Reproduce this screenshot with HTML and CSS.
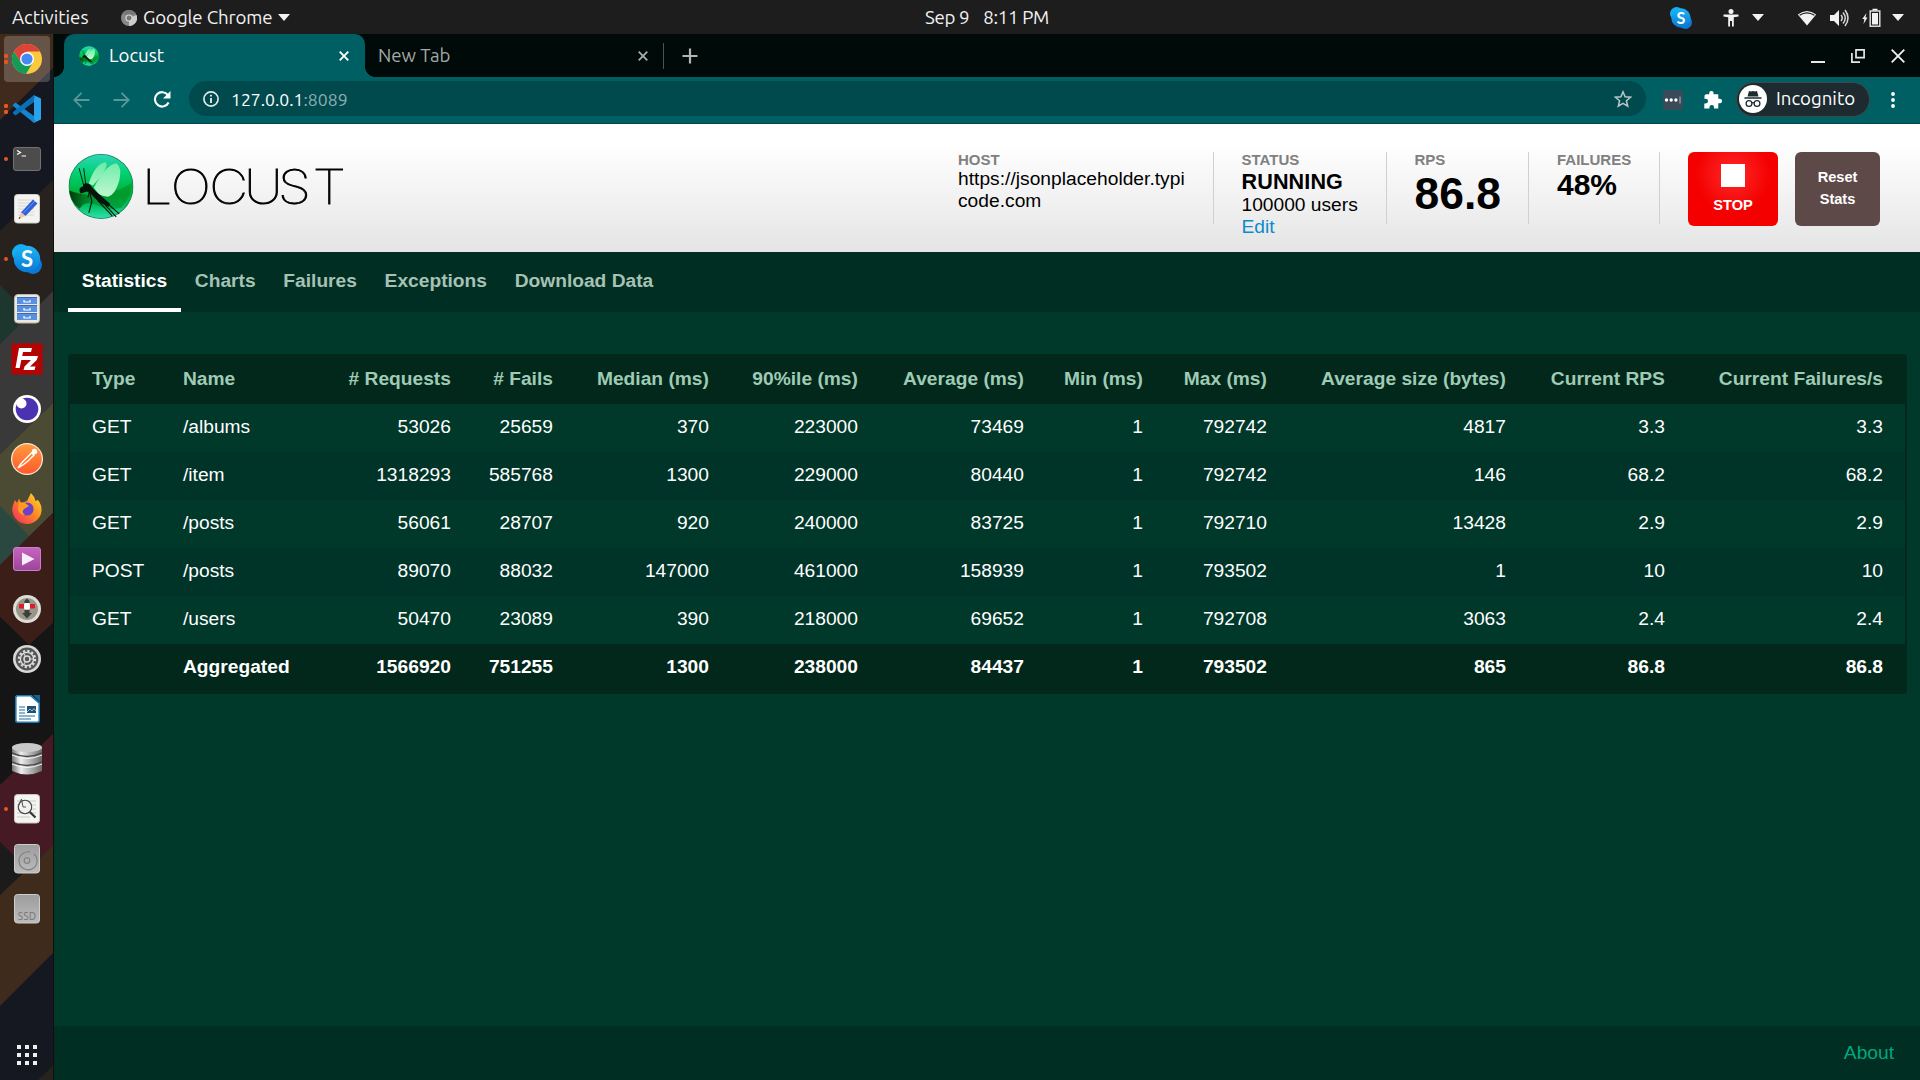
FILE: index.html
```html
<!DOCTYPE html>
<html lang="en">
<head>
<meta charset="utf-8">
<title>Locust</title>
<link rel="stylesheet" href="styles.css">
</head>
<body>
<svg class="defs" width="0" height="0" aria-hidden="true">
  <defs>
    <linearGradient id="orb" x1="0" y1="0" x2="0" y2="1"><stop offset="0" stop-color="#2fd6b8"/><stop offset=".3" stop-color="#00d070"/><stop offset=".62" stop-color="#00b038"/><stop offset=".8" stop-color="#00c060"/><stop offset="1" stop-color="#2fe0b0"/></linearGradient>
    <linearGradient id="orbShade" x1="0" y1="0" x2="1" y2="0"><stop offset="0" stop-color="#003b08"/><stop offset=".4" stop-color="#006a15" stop-opacity=".4"/><stop offset="1" stop-color="#008a1c" stop-opacity=".5"/></linearGradient>
    <linearGradient id="wing" x1="0" y1="0" x2="0" y2="1"><stop offset="0" stop-color="#7df0ac"/><stop offset="1" stop-color="#d4ffe0"/></linearGradient>
    <linearGradient id="skyblue" x1="0" y1="0" x2="0" y2="1"><stop offset="0" stop-color="#1cb5f5"/><stop offset="1" stop-color="#0a78d6"/></linearGradient>
    <linearGradient id="orange" x1="0" y1="0" x2="0" y2="1"><stop offset="0" stop-color="#ff9a3e"/><stop offset="1" stop-color="#ff5a2a"/></linearGradient>
    <linearGradient id="fox" x1="1" y1="0" x2="0" y2="1"><stop offset="0" stop-color="#ffe23a"/><stop offset=".45" stop-color="#ff8a1e"/><stop offset="1" stop-color="#f0256a"/></linearGradient>
    <linearGradient id="purple" x1="0" y1="0" x2="0" y2="1"><stop offset="0" stop-color="#c565c0"/><stop offset="1" stop-color="#9c459c"/></linearGradient>
    <linearGradient id="metal" x1="0" y1="0" x2="1" y2="0"><stop offset="0" stop-color="#777"/><stop offset=".3" stop-color="#eee"/><stop offset="1" stop-color="#6b6b6b"/></linearGradient>
    <linearGradient id="disk" x1="0" y1="0" x2="0" y2="1"><stop offset="0" stop-color="#9c9c9c"/><stop offset="1" stop-color="#bcbcbc"/></linearGradient>
    <symbol id="locust" viewBox="0 0 64 64">
      <circle cx="32" cy="32" r="32" fill="#13824f"/>
      <circle cx="32" cy="32" r="31.2" fill="url(#orb)"/>
      <path d="M1 36Q32 48 63 28Q62 42 52 53Q40 56 32 52Q16 44 11 54Q1 46 1 36Z" fill="url(#orbShade)"/>
      <path d="M20 29Q26 10 36 8Q42 11 24 31Z" fill="url(#wing)" opacity=".8"/>
      <path d="M25 33Q36 11 47 9Q53 13 50 26Q46 40 39 42Q33 42 29 39Z" fill="url(#wing)" opacity=".9"/>
      <path d="M11 37Q10 33 14 32L15 29.5Q19 27.5 22 31L25 35L33 42L41 49L39.5 52L30 47.5L22 39.5L18 37L14 38.5L12 39Z" fill="#06140b"/>
      <g fill="none" stroke="#06140b"><path d="M15 31L10.5 14M17 30L15 14" stroke-width=".9"/><path d="M21 38L23 47L20 58M20.5 38L19 43" stroke-width="1.1"/><path d="M34 45L50 59M36 50L47 62M29 46L43 61" stroke-width="1.1"/></g>
    </symbol>
    <symbol id="skype" viewBox="0 0 30 30"><circle cx="9" cy="9" r="9" fill="#12b0f3"/><circle cx="21" cy="21" r="9" fill="#0b78d3"/><circle cx="15" cy="15" r="13.2" fill="url(#skyblue)"/><text x="15" y="22.5" text-anchor="middle" class="skype-s">S</text></symbol>
  </defs>
</svg>

<header class="topbar">
  <span class="activities">Activities</span>
  <svg class="mini-chrome" width="16" height="16" viewBox="0 0 16 16"><circle cx="8" cy="8" r="8" fill="#888"/><path d="M8 8L15.5 5A8 8 0 0 1 8 16Z" fill="#ccc"/><path d="M1 4A8 8 0 0 1 15 4L8 5Z" fill="#777"/><circle cx="8" cy="8" r="3.6" fill="#ddd"/><circle cx="8" cy="8" r="2.5" fill="#777"/></svg>
  <span class="app-name">Google Chrome</span>
  <i class="caret"></i>
  <span class="clock"><span class="date">Sep 9</span><span class="time">8:11 PM</span></span>
  <div class="tray">
    <svg width="22" height="22" viewBox="0 0 30 30"><use href="#skype"/></svg>
    <svg class="person" width="16" height="18" viewBox="0 0 16 18" fill="#f2f2f2"><circle cx="8" cy="2.6" r="2.5"/><path d="M.5 5.5H15.5V7.5L10.8 8.2V17.5H9V12H7V17.5H5.2V8.2L.5 7.5Z"/></svg>
    <i class="caret tray-caret"></i>
    <svg class="wifi" width="20" height="16" viewBox="0 0 20 16"><path d="M.8 4.4Q10-2.6 19.2 4.4L10 15.5Z" fill="#f2f2f2"/><path d="M2.6 5.3Q10 .5 17.4 5.3" fill="none" stroke="#1d1d1d" stroke-width="1.2"/></svg>
    <svg class="speaker" width="20" height="18" viewBox="0 0 20 18"><path d="M0 6H4L9 1V17L4 12H0Z" fill="#f2f2f2"/><path d="M11 6Q13.5 9 11 12M13 3.5Q17.5 9 13 14.5M15 1Q21 9 15 17" fill="none" stroke="#d8d8d8" stroke-width="1.5"/></svg>
    <svg class="battery" width="19" height="19" viewBox="0 0 19 19"><path d="M4.5 5L.3 11H2.4L1.5 16L5.5 9.5H3.4Z" fill="#f2f2f2"/><path d="M8.2 3H17.8V18.2H8.2Z" fill="none" stroke="#d8d8d8" stroke-width="1.5"/><path d="M10.5.8H15.5V2.5H10.5ZM10 5H16V16.5H10Z" fill="#f2f2f2"/></svg>
    <i class="caret"></i>
  </div>
</header>

<div class="desktop">
<aside class="dock">
  <svg class="wallpaper" width="54" height="1046" viewBox="0 34 54 1046">
    <rect y="34" width="54" height="1046" fill="#151821"/>
    <path d="M0 34H54V67L0 120Z" fill="#402a1b"/>
    <path d="M54 179V290L0 344V231Z" fill="#28221f"/><path d="M0 285L29 315L0 344Z" fill="#1d362e"/>
    <path d="M54 290V402L0 454V344Z" fill="#393939"/>
    <path d="M54 402V512L0 565V454Z" fill="#4b4a33"/><path d="M0 506L29 536L0 565Z" fill="#2a4740"/>
    <path d="M54 512V622L29 645L0 617V565Z" fill="#3b1e18"/>
    <path d="M54 622V733L0 785V617L29 645Z" fill="#151515"/>
    <path d="M54 733V844L27 869L0 842V785Z" fill="#461a25"/>
    <path d="M0 842L27 869L0 895Z" fill="#1b1b1b"/>
    <path d="M54 844V952L0 1006V895Z" fill="#3f2b1b"/>
    <path d="M54 1065V1080H38Z" fill="#28221f"/>
    <path d="M53.5 34V1080" stroke="#10110f"/>
  </svg>
  <nav class="apps">
    <div class="app active two"><svg width="30" height="30" viewBox="0 0 30 30"><circle cx="15" cy="15" r="15" fill="#fbc93d"/><path d="M2 7.5A15 15 0 0 1 28 7.5H15L9 19Z" fill="#dc4437"/><path d="M2 7.5A15 15 0 0 0 14 30L20.5 19L15 16L9 18.5Z" fill="#139b58"/><circle cx="15" cy="15" r="7" fill="#fff"/><circle cx="15" cy="15" r="5.6" fill="#4688f4"/></svg></div>
    <div class="app two"><svg width="28" height="28" viewBox="0 0 28 28"><path d="M0 9.5L2.5 7.5L21 21V28L0 11Z" fill="#1287cf"/><path d="M0 18.5L2.5 20.5L21 7V0L0 17Z" fill="#0b6fb5"/><path d="M20.5 0L28 3.5V24.5L20.5 28Q22 26 21 24V4Q22 2 20.5 0Z" fill="#2aa3ee"/></svg></div>
    <div class="app one"><svg width="28" height="24" viewBox="0 0 28 24"><rect x=".5" y=".5" width="27" height="23" rx="2.5" fill="#4c4c4c" stroke="#717171"/><path d="M4 3.5L7.5 5.5L4 7.5M8.5 9H13" fill="none" stroke="#fff" stroke-width="1.2"/></svg></div>
    <div class="app"><svg width="26" height="30" viewBox="0 0 26 30"><rect x=".5" y=".5" width="25" height="28.5" rx="3" fill="#f3f3f1" stroke="#cfcfcb"/><path d="M4 6H20M4 9H20M4 12H20M4 15H20M4 18H20M4 21H20" stroke="#d5d5d5"/><path d="M7 18.5L19 5.5L23.5 9.5L11.5 22Z" fill="#2f5fd6"/><path d="M8.5 20L21 7" stroke="#6b95ff"/><path d="M7 18.5L11.5 22L4.5 25Z" fill="#efc59f"/><path d="M4.5 25L5.5 23L6.7 24Z" fill="#222"/></svg></div>
    <div class="app one"><svg width="30" height="30" viewBox="0 0 30 30"><use href="#skype"/></svg></div>
    <div class="app"><svg width="26" height="30" viewBox="0 0 26 30"><rect x=".5" y=".5" width="25" height="28.5" rx="3.5" fill="#ede8dd" stroke="#bcb7ad"/><path d="M3 3H23V10H3ZM3 11H23V18H3ZM3 19H23V26H3Z" fill="#5990e0"/><path d="M3 3.5H23M3 11.5H23M3 19.5H23" stroke="#3b6cbc"/><path d="M10 6V8H16V6M10 14V16H16V14M10 22V24H16V22" fill="none" stroke="#fff" stroke-width="1.2"/></svg></div>
    <div class="app"><svg width="32" height="32" viewBox="0 0 32 32"><rect x="1" y="1" width="30" height="30" fill="#b30404" stroke="#b30404" stroke-width="2" stroke-dasharray="3 2"/><path d="M8 5H21L20 9H12L11.2 13H16L15 17H10.3L8.7 25H4.5Z" fill="#fff"/><path d="M15.5 13H27L25.8 17L19 23.5H24.5L23.5 27H12.5L13.5 23.5L20 17H14.5Z" fill="#fff"/></svg></div>
    <div class="app"><svg width="28" height="28" viewBox="0 0 28 28"><circle cx="14" cy="14" r="14" fill="#fff"/><circle cx="14" cy="14" r="11.3" fill="#4a32b0"/><circle cx="8.5" cy="8.5" r="5" fill="#fff"/></svg></div>
    <div class="app"><svg width="32" height="32" viewBox="0 0 32 32"><circle cx="16" cy="16" r="16" fill="#f6e9df"/><circle cx="16" cy="16" r="14.8" fill="url(#orange)"/><circle cx="23.5" cy="8.5" r="2.7" fill="#fff"/><path d="M20.5 10L10.5 20L7 25L12.5 21.5L17 18L23 12Z" fill="none" stroke="#fff" stroke-width="1.4"/></svg></div>
    <div class="app"><svg class="firefox" width="30" height="31" viewBox="0 0 30 31"><path d="M15 31A14.5 14.5 0 0 1 1 12L3 7L5 10L7 5.5L9 10L15 8L19 0Q23 4 23.5 8L26 7Q30 12 29.5 18A14.5 14.5 0 0 1 15 31Z" fill="url(#fox)"/><circle cx="15" cy="16" r="6.6" fill="#6c41c9"/><path d="M7 9L13 10L17 13L12 16Q9 19 13 22Q7 22 6 16Z" fill="#ff9b21"/></svg></div>
    <div class="app"><svg width="28" height="24" viewBox="0 0 28 24"><rect x=".5" y=".5" width="27" height="23" rx="2.5" fill="url(#purple)" stroke="#cf7ccb"/><path d="M9 5.5L21.5 12L9 18.5Z" fill="#f7eef7"/></svg></div>
    <div class="app"><svg width="28" height="28" viewBox="0 0 28 28"><circle cx="14" cy="14" r="14" fill="#deddd9"/><circle cx="14" cy="14" r="11" fill="#99978a"/><path d="M11.5 6L14 3.5L16.5 6V8H11.5ZM11.5 15H16.5V18H19L14 23.5L9 18H11.5Z" fill="#3f3f3a"/><rect x="6" y="9" width="16" height="4.5" rx="1" fill="#e01b24"/><rect x="11" y="8" width="6" height="6.5" rx="1.5" fill="#fff"/></svg></div>
    <div class="app"><svg width="28" height="28" viewBox="0 0 28 28"><circle cx="14" cy="14" r="14" fill="#d8d8d8"/><circle cx="14" cy="14" r="11.4" fill="#555"/><circle cx="14" cy="14" r="8" fill="none" stroke="#ddd" stroke-width="2.4" stroke-dasharray="2.2 1.99"/><circle cx="14" cy="14" r="6.6" fill="none" stroke="#ddd" stroke-width="1.3"/><circle cx="14" cy="14" r="3" fill="none" stroke="#ddd" stroke-width="1.5"/><path d="M17 14H21M12.5 16.5L11 19M12.5 11.5L11 9" stroke="#ddd"/></svg></div>
    <div class="app"><svg width="25" height="28" viewBox="0 0 25 28"><path d="M2 .7H16L24.3 8V26L23 27.3H2L.7 26V2Z" fill="#fff" stroke="#1b7ab5" stroke-width="1.8"/><path d="M18 0H25V7Z" fill="#1d5f8e"/><path d="M4 12H10M4 15H10M4 18H10M4 21H20M4 24H16" stroke="#1b6a9e" stroke-width="1.2"/><rect x="12" y="11" width="9" height="7" fill="#22506e"/><path d="M12 17L15 14L17 16L19 13.5L21 16" stroke="#8fc4e3" fill="none"/></svg></div>
    <div class="app"><svg width="30" height="32" viewBox="0 0 30 32"><path d="M0 4V28Q15 35 30 28V4Z" fill="url(#metal)"/><ellipse cx="15" cy="4.5" rx="15" ry="4.5" fill="#c9c9c9"/><path d="M0 10Q15 17 30 10M0 19Q15 26 30 19" stroke="#4c4c4c" stroke-width="1.5" fill="none"/><path d="M0 12Q15 19 30 12M0 21Q15 28 30 21" stroke="#f5f5f5" fill="none"/></svg></div>
    <div class="app one"><svg width="26" height="30" viewBox="0 0 26 30"><rect x=".5" y=".5" width="25" height="28.5" rx="3" fill="#f4f4f2" stroke="#c6c6c2"/><path d="M3 7H22M3 11H22M3 15H22M3 19H22M3 23H16" stroke="#c9c9c5"/><circle cx="11" cy="13" r="6.7" fill="#f1f1ee" stroke="#444" stroke-width="1.1"/><path d="M4 13L7.5 5L9 13H12" fill="none" stroke="#555"/><path d="M15.8 18L21.5 23.5" stroke="#333" stroke-width="2.2"/></svg></div>
    <div class="app"><svg width="26" height="30" viewBox="0 0 26 30"><rect x=".5" y=".5" width="25" height="28.5" rx="3" fill="url(#disk)" stroke="#cdcdcd"/><path d="M20 10A9 9 0 1 1 16 8" fill="none" stroke="#7e7e7e" stroke-width="1.1"/><circle cx="13" cy="16.5" r="2.8" fill="none" stroke="#7e7e7e" stroke-width="1.1"/></svg></div>
    <div class="app"><svg width="26" height="30" viewBox="0 0 26 30"><rect x=".5" y=".5" width="25" height="28.5" rx="3" fill="url(#disk)" stroke="#cdcdcd"/><text x="13" y="25.5" text-anchor="middle" class="ssd">SSD</text></svg></div>
  </nav>
  <svg class="grid-button" width="20" height="20" viewBox="0 0 20 20" fill="#eee"><path d="M0 0h4v4H0zM8 0h4v4H8zM16 0h4v4H16zM0 8h4v4H0zM8 8h4v4H8zM16 8h4v4H16zM0 16h4v4H0zM8 16h4v4H8zM16 16h4v4H16z"/></svg>
</aside>

<section class="browser">
  <div class="tabstrip">
    <div class="tab current">
      <svg width="20" height="20"><use href="#locust"/></svg>
      <span class="tab-title locust-title">Locust</span>
      <svg class="tab-close" width="10" height="10" viewBox="0 0 10 10" stroke="#fff" stroke-width="1.9"><path d="M.7.7L9.3 9.3M9.3.7L.7 9.3"/></svg>
    </div>
    <div class="tab">
      <span class="tab-title newtab-title">New Tab</span>
      <svg class="tab-close" width="10" height="10" viewBox="0 0 10 10" stroke="#a9adac" stroke-width="1.8"><path d="M.7.7L9.3 9.3M9.3.7L.7 9.3"/></svg>
    </div>
    <svg class="plus" width="16" height="16" viewBox="0 0 16 16" stroke="#b2b5b4" stroke-width="2.2"><path d="M8 .5V15.5M.5 8H15.5"/></svg>
    <div class="window-buttons">
      <svg width="14" height="16" viewBox="0 0 14 16"><path d="M0 14H14" stroke="#e8e8e8" stroke-width="2"/></svg>
      <svg width="14" height="14" viewBox="0 0 14 14" fill="none" stroke="#e8e8e8" stroke-width="1.7"><path d="M5 .9H13.1V8.7H5ZM.9 4V13.1H9"/></svg>
      <svg width="14" height="14" viewBox="0 0 14 14" stroke="#f0f0f0" stroke-width="1.8"><path d="M.7.7L13.3 13.3M13.3.7L.7 13.3"/></svg>
    </div>
  </div>

  <div class="toolbar">
    <svg class="back" width="17" height="16" viewBox="0 0 17 16" fill="none" stroke="#5b9699" stroke-width="1.8"><path d="M16.5 8H1.5M8.5 .8L1.3 8L8.5 15.2"/></svg>
    <svg class="forward" width="17" height="16" viewBox="0 0 17 16" fill="none" stroke="#5b9699" stroke-width="1.8"><path d="M.5 8H15.5M8.5 .8L15.7 8L8.5 15.2"/></svg>
    <svg class="reload" width="18" height="17" viewBox="0 0 18 17"><path d="M15 4.2A7.2 7.2 0 1 0 15.6 11.5" fill="none" stroke="#fff" stroke-width="2.1"/><path d="M17.5 0V7.5H10Z" fill="#fff"/></svg>
    <div class="omnibox">
      <svg width="16" height="16" viewBox="0 0 16 16"><circle cx="8" cy="8" r="7.1" fill="none" stroke="#dfe9e9" stroke-width="1.7"/><path d="M8 3.8V5.6M8 7V12" stroke="#dfe9e9" stroke-width="1.9"/></svg>
      <span class="url"><b>127.0.0.1</b>:8089</span>
      <svg class="star" width="18" height="18" viewBox="0 0 18 18" fill="none" stroke="#b9c6c8" stroke-width="1.5"><path d="M9 1.8L11.1 6.8L16.6 7.2L12.4 10.8L13.7 16.2L9 13.3L4.3 16.2L5.6 10.8L1.4 7.2L6.9 6.8Z"/></svg>
    </div>
    <svg class="extension" width="20" height="20" viewBox="0 0 20 20"><rect width="20" height="20" rx="2" fill="#3a4a58"/><circle cx="3.5" cy="10" r="1.7" fill="#fff"/><circle cx="8.2" cy="10" r="1.7" fill="#fff"/><circle cx="12.9" cy="10" r="1.7" fill="#fff"/><path d="M17 6.5V13.5" stroke="#aab7bc"/></svg>
    <svg class="puzzle" width="18" height="18" viewBox="0 0 18 18" fill="#fff"><path d="M1.8 3.3H5.3Q4.8 0 7.4 0Q10 0 9.5 3.3H14.3V7.8Q18 7.3 18 10Q18 12.7 14.3 12.2V17.5H10Q10.5 14 7.8 14Q5 14 5.5 17.5H.3V12.4Q4 12.8 4 10Q4 7.4 .5 7.9V4.5Z"/></svg>
    <div class="incognito">
      <svg width="28" height="28" viewBox="0 0 28 28"><circle cx="14" cy="14" r="14" fill="#fff"/><path d="M8.5 11.5L10 6L12 6.4L14 6L16 6.4L18 6L19.5 11.5Z" fill="#1d2b30"/><path d="M5.5 13H22.5" stroke="#1d2b30" stroke-width="1.5"/><g fill="none" stroke="#1d2b30" stroke-width="1.3"><circle cx="10" cy="18.5" r="2.9"/><circle cx="18" cy="18.5" r="2.9"/><path d="M12.8 18Q14 17.2 15.2 18"/></g></svg>
      <span class="incognito-text">Incognito</span>
    </div>
    <svg class="menu-dots" width="4" height="16" viewBox="0 0 4 16" fill="#fff"><circle cx="2" cy="2" r="1.9"/><circle cx="2" cy="8" r="1.9"/><circle cx="2" cy="14" r="1.9"/></svg>
  </div>

  <main class="page">
    <div class="masthead">
      <svg class="logo" width="290" height="66" viewBox="0 0 290 66"><use href="#locust" x=".5" y="1" width="65" height="65"/><text class="logo-text" transform="scale(1.12 1)" x="66 91.8 126.2 157.2 187.6 218.6" y="51">LOCUST</text></svg>
      <div class="boxes">
        <div class="box host"><div class="label">Host</div><div>https://jsonplaceholder.typi<br>code.com</div></div>
        <div class="box status"><div class="label">Status</div><div class="state">RUNNING</div><div>100000 users</div><a>Edit</a></div>
        <div class="box rps"><div class="label">RPS</div><div class="rps-value">86.8</div></div>
        <div class="box fail"><div class="label">Failures</div><div class="fail-value">48%</div></div>
        <button class="stop"><i></i>STOP</button>
        <button class="reset">Reset<br>Stats</button>
      </div>
    </div>
    <nav class="menu"><a class="selected">Statistics</a><a>Charts</a><a>Failures</a><a>Exceptions</a><a>Download Data</a></nav>
    <div class="content">
      <table class="stats">
        <colgroup><col class="c-type"><col class="c-name"><col class="c-req"><col class="c-fails"><col class="c-med"><col class="c-90"><col class="c-avg"><col class="c-min"><col class="c-max"><col class="c-size"><col class="c-rps"><col class="c-fps"></colgroup>
        <thead><tr><th>Type</th><th>Name</th><th># Requests</th><th># Fails</th><th>Median (ms)</th><th>90%ile (ms)</th><th>Average (ms)</th><th>Min (ms)</th><th>Max (ms)</th><th>Average size (bytes)</th><th>Current RPS</th><th>Current Failures/s</th></tr></thead>
        <tbody>
          <tr><td>GET</td><td>/albums</td><td>53026</td><td>25659</td><td>370</td><td>223000</td><td>73469</td><td>1</td><td>792742</td><td>4817</td><td>3.3</td><td>3.3</td></tr>
          <tr><td>GET</td><td>/item</td><td>1318293</td><td>585768</td><td>1300</td><td>229000</td><td>80440</td><td>1</td><td>792742</td><td>146</td><td>68.2</td><td>68.2</td></tr>
          <tr><td>GET</td><td>/posts</td><td>56061</td><td>28707</td><td>920</td><td>240000</td><td>83725</td><td>1</td><td>792710</td><td>13428</td><td>2.9</td><td>2.9</td></tr>
          <tr><td>POST</td><td>/posts</td><td>89070</td><td>88032</td><td>147000</td><td>461000</td><td>158939</td><td>1</td><td>793502</td><td>1</td><td>10</td><td>10</td></tr>
          <tr><td>GET</td><td>/users</td><td>50470</td><td>23089</td><td>390</td><td>218000</td><td>69652</td><td>1</td><td>792708</td><td>3063</td><td>2.4</td><td>2.4</td></tr>
        </tbody>
        <tfoot><tr><td></td><td>Aggregated</td><td>1566920</td><td>751255</td><td>1300</td><td>238000</td><td>84437</td><td>1</td><td>793502</td><td>865</td><td>86.8</td><td>86.8</td></tr></tfoot>
      </table>
    </div>
    <footer class="about"><a>About</a></footer>
  </main>
</section>
</div>
</body>
</html>
```
FILE: styles.css
```css
* { box-sizing: border-box; }
body { margin: 0; width: 1920px; height: 1080px; overflow: hidden; display: flex; flex-direction: column; background: #1d1d1d; font-family: "Ubuntu", "Noto Sans", sans-serif; color: #f2f2f2; }
svg { display: block; flex: none; }
.defs { position: absolute; }

/* system bar */
.topbar { height: 34px; flex: none; display: grid; grid-template-columns: 109px 16px 141px 12px 1fr auto; align-items: center; padding: 0 16px 0 12px; background: #1d1d1d; font-size: 18.67px; line-height: 34px; white-space: nowrap; }
.topbar > span { padding-top: 1px; }
.topbar > .app-name { padding-left: 6px; letter-spacing: -.1px; }
.caret { width: 12px; height: 7px; background: #f2f2f2; clip-path: polygon(0 0, 100% 0, 50% 100%); }
.topbar > .clock { padding-left: 635px; display: flex; gap: 14px; letter-spacing: -.3px; }
.tray { display: flex; align-items: center; }
.person { margin-left: 31px; }
.tray-caret { margin-left: 13px; }
.wifi { margin-left: 33px; }
.speaker { margin-left: 13px; }
.battery { margin: 0 11px 0 12px; }

.desktop { flex: 1; display: flex; min-height: 0; }

/* launcher */
.dock { width: 54px; flex: none; display: grid; grid-template-rows: 1fr auto; justify-items: center; }
.wallpaper { grid-area: 1 / 1 / 3 / 2; }
.apps { grid-area: 1 / 1; z-index: 1; width: 54px; }
.app { height: 50px; display: grid; place-items: center; }
.app > svg { grid-area: 1 / 1; z-index: 1; }
.firefox { margin-bottom: 2px; }
.app.active::after { content: ""; grid-area: 1 / 1; width: 46px; height: 46px; border-radius: 4px; background: rgba(255, 255, 255, .2); }
.app.one::before, .app.two::before { content: ""; grid-area: 1 / 1; justify-self: start; margin-left: 4px; width: 4px; height: 4px; border-radius: 2px; background: #e95420; z-index: 1; }
.app.two::before { height: 10px; background: radial-gradient(circle at 2px 2px, #e95420 2px, transparent 2.3px) 0 0 / 4px 5px no-repeat, radial-gradient(circle at 2px 3px, #e95420 2px, transparent 2.3px) 0 5px / 4px 5px no-repeat; border-radius: 0; }
.grid-button { grid-area: 2 / 1; margin-bottom: 15px; z-index: 1; }
.skype-s { font: 700 22px "Lato", sans-serif; fill: #fff; }
.ssd { font: 10px "Noto Sans", sans-serif; fill: #777; }

/* browser frame */
.browser { flex: 1; display: flex; flex-direction: column; min-width: 0; }
.tabstrip { height: 43px; flex: none; display: flex; align-items: center; padding-left: 10px; background: #000a08; font-size: 18.67px; line-height: 41px; }
.tab { display: flex; align-items: center; width: 299px; height: 43px; padding: 0 16px 0 13px; color: #a4a8a7; }
.tab.current { position: relative; width: 301px; padding: 0 16px 0 15px; background: #005f63; border-radius: 10px 10px 0 0; color: #fff; }
.tab.current::before, .tab.current::after { content: ""; position: absolute; bottom: 0; width: 10px; height: 10px; }
.tab.current::before { left: -10px; background: radial-gradient(circle at 0 0, transparent 9.6px, #005f63 10px); }
.tab.current::after { right: -10px; background: radial-gradient(circle at 100% 0, transparent 9.6px, #005f63 10px); }
.tab-title { margin: 0 0 0 10px; }
.tab.current + .tab .tab-title { margin-left: 0; }
.tab-close { margin-left: auto; }
.plus { box-sizing: content-box; padding-left: 18px; height: 26px; border-left: 1px solid #4c5352; margin-left: -1px; }
.window-buttons { margin-left: auto; display: flex; gap: 26px; padding-right: 15px; align-items: center; }

.toolbar { height: 47px; flex: none; display: flex; align-items: center; padding: 0 25px 1px 19px; background: #005f63; border-bottom: 1px solid #00464a; }
.forward { margin-left: 23px; }
.reload { margin-left: 23px; }
.omnibox { margin: -2px 0 0 18px; width: 1457px; height: 35px; border-radius: 18px; background: #004a4e; display: flex; align-items: center; padding: 0 14px; font-size: 17.6px; color: #8cb0b2; }
.url { margin: 1px 0 0 12px; }
.url b { font-weight: 400; color: #fff; }
.star { margin-left: auto; }
.extension { margin-left: 17px; }
.puzzle { margin: 0 14px 0 21px; }
.incognito { width: 134px; height: 35px; margin-top: -1px; border: 1px solid #3d494d; border-radius: 18px; background: #1d2b30; color: #fff; display: flex; align-items: center; padding-left: 2px; font-size: 18.67px; }
.incognito-text { margin: -2px 0 0 9px; }
.menu-dots { margin-left: auto; }

/* web page */
.page { flex: 1; display: flex; flex-direction: column; background: #00382a; font: 19.2px/22px "Liberation Sans", Arial, sans-serif; color: #fff; }
.masthead { height: 128px; flex: none; display: flex; justify-content: space-between; padding: 28px 40px 0 14px; background: linear-gradient(#fff 15%, #e6e6e6 95%); color: #000; }
.logo-text { font: 100 48px "Inter", "Lato", sans-serif; fill: #000; stroke: #000; stroke-width: .9px; }
.logo { margin-top: 1px; }
.boxes { display: flex; align-items: flex-start; }
.box { height: 72px; padding: 0 0 0 27px; border-right: 1px solid #d0d0d0; white-space: nowrap; }
.label { font-size: 15px; line-height: 16px; font-weight: 700; color: #808080; text-transform: uppercase; }
.host { width: 283px; letter-spacing: .02px; }
.status { width: 173px; padding-left: 27.5px; }
.rps { width: 142px; padding-left: 27.5px; }
.fail { width: 131px; padding-left: 28px; }
.box a { color: #0b8bcb; }
.state { font-size: 21.6px; line-height: 25px; padding-top: 1px; font-weight: 700; letter-spacing: .1px; }
.rps-value { font-size: 44.4px; line-height: 51px; font-weight: 700; }
.fail-value { font-size: 30px; line-height: 34px; font-weight: 700; }
.stop, .reset { height: 74px; border: 0; border-radius: 6px; padding: 0; font: 700 14.6px/22px "Liberation Sans", Arial, sans-serif; color: #fff; }
.stop { margin-left: 28px; width: 90px; padding-top: 2px; background: radial-gradient(circle at 50% 30%, #ff2a2a, #f40000 38px); }
.stop i { display: block; width: 24px; height: 23px; margin: 0 auto 7px; background: #fff; }
.reset { margin-left: 17px; width: 85px; padding-bottom: 2px; background: #5e4949; }

.menu { height: 60px; flex: none; display: flex; padding-left: 14px; background: #002e22; font-weight: 700; }
.menu a { padding: 18px 13.85px 0; color: #a6c2b5; }
.menu .selected { border-bottom: 4px solid #fff; color: #fff; }
.content { flex: 1; padding: 42px 13px 0 14px; }
.stats { width: 1839px; table-layout: fixed; border-collapse: separate; border-spacing: 0; border: 2px solid #02271b; border-radius: 4px; overflow: hidden; }
.stats th, .stats td { height: 48px; padding: 0 21.6px 2px 0; text-align: right; white-space: nowrap; }
.stats th { color: #9fcbb5; background: #02271b; }
.stats tr > :nth-child(-n+2) { text-align: left; padding-left: 22px; padding-right: 0; }
.stats tr > :last-child { padding-right: 22px; }
.stats tbody tr:nth-child(even) { background: #003428; }
.stats tfoot { background: #02271b; font-weight: 700; }
.c-type { width: 91px; } .c-name { width: 164.5px; } .c-req { width: 147px; } .c-fails { width: 102px; }
.c-med { width: 156px; } .c-90 { width: 149px; } .c-avg { width: 166px; } .c-min { width: 119px; }
.c-max { width: 124px; } .c-size { width: 239px; } .c-rps { width: 159px; } .c-fps { width: 218.5px; }
.about { height: 54px; flex: none; display: flex; justify-content: flex-end; align-items: center; padding-right: 26px; background: #002e22; color: #00a87e; }
```
